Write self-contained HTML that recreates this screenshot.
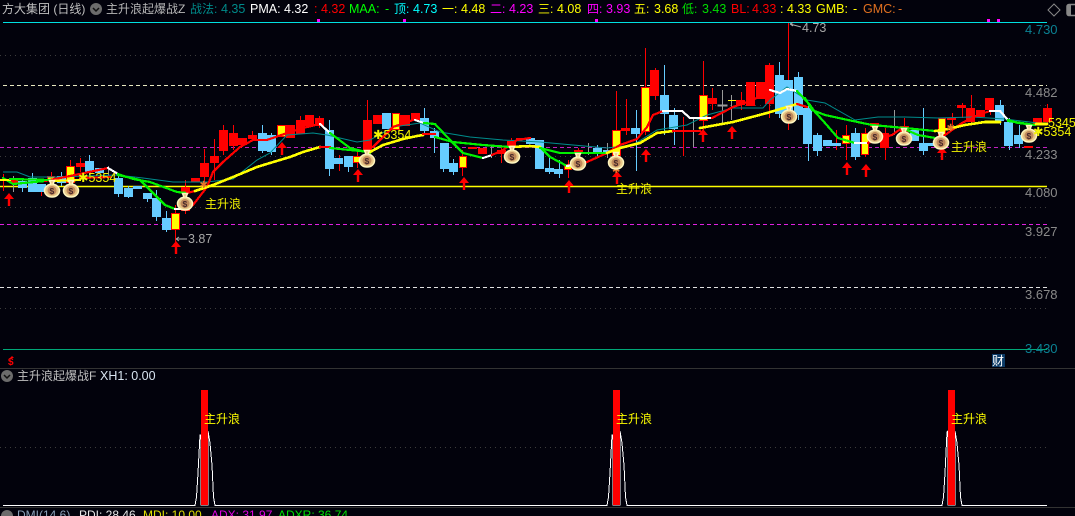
<!DOCTYPE html>
<html><head><meta charset="utf-8">
<style>
html,body{margin:0;padding:0;background:#02020c;width:1075px;height:516px;overflow:hidden}
svg{display:block;position:absolute;left:0;top:0}
text{font-family:"Liberation Sans","Noto Sans CJK SC",sans-serif;font-size:12.5px}
.c{font-size:12px}
.r{fill:#f00}.b{fill:#66ccff}.y{fill:#ff0;stroke:#f00;stroke-width:1}
.wr{stroke:#f00;stroke-width:1}.wb{stroke:#66ccff;stroke-width:1}.wg{stroke:#999;stroke-width:1}
.l{fill:none;stroke-width:2.200;stroke-linejoin:round;stroke-linecap:round;shape-rendering:crispEdges}
.ax{fill:#8a8a8a;font-size:13px}
.z{fill:#f4f400;font-size:12px}
.s{font-size:8.500px;font-weight:bold;fill:#4a2a2a}
</style></head><body>
<svg width="1075" height="516" viewBox="0 0 1075 516">
<defs>
<g id="bag"><path d="M-2.500-8.500h5l-1.500 3.500c4 1 6.500 3.500 6.500 6.500 0 4-3.500 6.500-7.500 6.500s-7.500-2.500-7.500-6.500c0-3 2.500-5.500 6.500-6.500z" fill="#e8c888" stroke="#fff6c0" stroke-width="1.500"/><circle cx="0" cy="1.500" r="4.500" fill="#c08a5c"/></g>
<path id="arr" d="M0-6L5 0H1.200V7H-1.200V0H-5Z" fill="#f00"/>
<circle id="dot" r="6" fill="#6c6c6c"/>
</defs>

<!-- grid -->
<g fill="none" stroke-width="1">
<g stroke="#3c3c3c" stroke-dasharray="1 4">
<path d="M0 55.500H1047M0 105.500H1047M0 156.500H1047M0 207.500H1047M0 257.500H1047M0 308.500H1047M0 447.500H1047"/>
</g>
<path d="M3 85.500H1047" stroke="#e8e8c0" stroke-dasharray="4 3"/>
<path d="M0 147.500H1047" stroke="#c020c0" stroke-dasharray="4 3"/>
<path d="M0 224.500H1047" stroke="#e020e0" stroke-dasharray="4 3"/>
<path d="M0 287.500H1047" stroke="#e0e0e0" stroke-dasharray="4 3"/>
<path d="M3 22.500H1047" stroke="#00e0e0"/>
<path d="M3 349.500H1047" stroke="#00a878"/>
<path d="M0 368.500H1075" stroke="#333"/>
<path d="M0 507.500H1075" stroke="#333"/>
<path d="M0 186.500H1047" stroke="#ffff00" stroke-width="1.500"/>
</g>
<g fill="#f0f"><rect x="317" y="19" width="3" height="3"/><rect x="403" y="19" width="3" height="3"/><rect x="595" y="19" width="3" height="3"/><rect x="987" y="19" width="3" height="3"/><rect x="997" y="19" width="3" height="3"/></g>

<!-- wicks -->
<g shape-rendering="crispEdges">
<path class="wg" d="M13.500 176V192M108.500 166V178M491.500 146V158M588.500 143V155M607.500 143V158M693.500 118V147M722.500 90V125M731.500 95V120M894.500 110V135"/>
<path class="wb" d="M22.500 178V192M32.500 173V192M61.500 172V186M89.500 155V175M118.500 173V197M128.500 186V198M156.500 190V221M166.500 211V232M147.500 193V202M262.500 125V153M271.500 133V155M329.500 120V176M348.500 156V172M424.500 108V135M434.500 128V153M443.500 143V172M453.500 159V175M549.500 158V174M559.500 160V178M597.500 145V158M636.500 110V171M664.500 65V135M674.500 108V145M779.500 62V118M798.500 72V120M808.500 105V161M817.500 133V156M855.500 128V160M923.500 108V155M1000.500 100V125M1009.500 118V150M1019.500 125V148"/>
<path class="wr" d="M3.500 174V191M41.500 186V196M51.500 172V178M70.500 160V197M80.500 158V172M175.500 205V243M185.500 180V214M204.500 149V188M214.500 139V180M223.500 125V155M233.500 125V150M252.500 131V140M300.500 116V134M319.500 116V128M339.500 155V171M357.500 150V168M367.500 100V158M462.500 150V176M501.500 145V163M511.500 138V150M568.500 160V178M578.500 148V158M616.500 91V175M626.500 99V135M645.500 48V135M655.500 68V100M683.500 117V156M703.500 61V130M712.500 88V110M741.500 92V110M769.500 63V118M788.500 23V130M836.500 130V150M846.500 125V160M865.500 128V157M885.500 128V160M904.500 118V140M952.500 113V125M962.500 103V118M971.500 95V125M990.500 98V115M1047.500 104V125"/>

<!-- candle bodies -->
<rect class="r" x="9" y="180" width="9" height="3"/>
<rect class="b" x="18" y="181" width="9" height="7"/>
<rect class="b" x="28" y="178" width="9" height="14"/>
<rect class="b" x="37" y="184" width="9" height="8"/>
<rect class="y" x="47.500" y="176.500" width="7" height="3"/>
<rect class="b" x="57" y="176" width="9" height="7"/>
<rect class="y" x="66.500" y="166.500" width="8" height="16"/>
<rect class="r" x="76" y="163" width="9" height="4"/>
<rect class="b" x="85" y="161" width="9" height="11"/>
<rect class="b" x="95" y="168" width="9" height="5"/>
<rect class="b" x="114" y="178" width="9" height="16"/>
<rect class="b" x="124" y="188" width="9" height="9"/>
<rect class="b" x="133" y="186" width="9" height="3"/>
<rect class="b" x="143" y="193" width="9" height="6"/>
<rect class="b" x="152" y="198" width="9" height="19"/>
<rect class="b" x="162" y="218" width="9" height="12"/>
<rect class="y" x="171.500" y="213.500" width="8" height="16"/>
<rect class="r" x="181" y="187" width="9" height="6"/>
<rect class="r" x="181" y="208" width="9" height="3"/>
<rect class="r" x="191" y="178" width="9" height="4"/>
<rect class="r" x="200" y="163" width="9" height="14"/>
<rect class="r" x="210" y="156" width="9" height="7"/>
<rect class="r" x="219" y="130" width="9" height="21"/>
<rect class="r" x="229" y="133" width="9" height="13"/>
<rect class="r" x="238" y="138" width="9" height="7"/>
<rect class="r" x="248" y="135" width="9" height="4"/>
<rect class="b" x="258" y="133" width="9" height="18"/>
<rect class="b" x="267" y="135" width="9" height="17"/>
<rect class="y" x="277.500" y="125.500" width="8" height="11"/>
<rect class="r" x="286" y="125" width="9" height="13"/>
<rect class="r" x="296" y="120" width="9" height="14"/>
<rect class="r" x="305" y="115" width="9" height="11"/>
<rect class="r" x="315" y="118" width="9" height="8"/>
<rect class="b" x="325" y="130" width="9" height="39"/>
<rect class="b" x="334" y="158" width="9" height="6"/>
<rect class="b" x="344" y="156" width="9" height="11"/>
<rect class="y" x="353.500" y="156.500" width="7" height="6"/>
<rect class="r" x="363" y="120" width="9" height="30"/>
<rect class="r" x="373" y="115" width="9" height="9"/>
<rect class="b" x="382" y="113" width="9" height="16"/>
<rect class="y" x="392.500" y="113.500" width="7" height="16"/>
<rect class="r" x="400" y="115" width="10" height="11"/>
<rect class="r" x="411" y="113" width="9" height="7"/>
<rect class="b" x="420" y="118" width="9" height="13"/>
<rect class="b" x="430" y="131" width="9" height="7"/>
<rect class="b" x="440" y="143" width="9" height="26"/>
<rect class="b" x="449" y="163" width="9" height="9"/>
<rect class="y" x="459.500" y="156.500" width="7" height="11"/>
<rect class="r" x="468" y="147" width="9" height="2"/>
<rect class="r" x="478" y="148" width="9" height="6"/>
<rect class="r" x="497" y="150" width="9" height="4"/>
<rect class="r" x="507" y="141" width="9" height="5"/>
<rect class="r" x="516" y="138" width="9" height="2"/>
<rect class="b" x="526" y="138" width="9" height="6"/>
<rect class="b" x="535" y="140" width="9" height="29"/>
<rect class="b" x="545" y="168" width="9" height="4"/>
<rect class="b" x="554" y="169" width="9" height="5"/>
<rect class="y" x="564.500" y="164.500" width="7" height="5"/>
<rect class="r" x="574" y="150" width="9" height="3"/>
<rect class="b" x="593" y="148" width="9" height="4"/>
<rect class="b" x="603" y="150" width="8" height="3"/>
<rect class="y" x="612.500" y="130.500" width="8" height="25"/>
<rect class="r" x="621" y="128" width="9" height="3"/>
<rect class="b" x="631" y="128" width="9" height="6"/>
<rect class="y" x="641.500" y="87.500" width="8" height="44"/>
<rect class="r" x="650" y="70" width="9" height="26"/>
<rect class="b" x="660" y="95" width="9" height="19"/>
<rect class="b" x="669" y="115" width="9" height="14"/>
<rect class="y" x="699.500" y="95.500" width="8" height="25"/>
<rect class="r" x="708" y="98" width="9" height="6"/>
<rect class="wg" x="718" y="105" width="9" height="1" fill="#999"/>
<rect x="728" y="100" width="8" height="1" fill="#ff0"/>
<rect class="r" x="736" y="100" width="9" height="5"/>
<rect class="r" x="746" y="82" width="9" height="24"/>
<rect class="r" x="756" y="82" width="9" height="17"/>
<rect class="r" x="765" y="65" width="9" height="39"/>
<rect class="b" x="775" y="75" width="9" height="39"/>
<rect class="b" x="784" y="80" width="9" height="40"/>
<rect class="b" x="794" y="77" width="9" height="38"/>
<rect class="b" x="803" y="108" width="9" height="36"/>
<rect class="b" x="813" y="135" width="9" height="16"/>
<rect class="b" x="823" y="140" width="9" height="6"/>
<rect class="b" x="832" y="143" width="9" height="3"/>
<rect class="y" x="842.500" y="135.500" width="7" height="8"/>
<rect class="b" x="851" y="133" width="9" height="24"/>
<rect class="y" x="861.500" y="133.500" width="7" height="21"/>
<rect class="r" x="870" y="123" width="9" height="4"/>
<rect class="r" x="880" y="133" width="9" height="15"/>
<rect class="r" x="900" y="126" width="9" height="6"/>
<rect class="b" x="910" y="130" width="9" height="11"/>
<rect class="b" x="919" y="143" width="9" height="8"/>
<rect class="b" x="928" y="143" width="9" height="3"/>
<rect class="y" x="938.500" y="118.500" width="7" height="17"/>
<rect class="r" x="947" y="118" width="9" height="2"/>
<rect class="r" x="957" y="105" width="9" height="3"/>
<rect class="r" x="966" y="108" width="9" height="14"/>
<rect class="r" x="976" y="110" width="9" height="7"/>
<rect class="r" x="985" y="98" width="9" height="12"/>
<rect class="b" x="995" y="105" width="9" height="16"/>
<rect class="b" x="1004" y="122" width="9" height="24"/>
<rect class="b" x="1014" y="135" width="9" height="9"/>
<rect class="r" x="1024" y="146" width="9" height="2"/>
<rect class="r" x="1033" y="118" width="9" height="7"/>
<rect class="r" x="1043" y="108" width="9" height="14"/>
</g>

<!-- teal MA -->
<path fill="none" stroke="#008c8c" stroke-width="1" d="M3 172L17 172L30 177L57 177L117 175L143 178L173 182L207 182L233 179L257 160L270 153L287 135L313 133L327 135L357 142L370 140L393 127L420 123L440 132L470 137L503 140L540 142L573 145L607 148L633 145L657 130L687 125L707 115L733 108L763 108L770 100L787 87L807 100L825 103L855 120L878 117L905 117L938 118L972 117L1005 119L1038 123"/>

<!-- fast MA -->
<path class="l" stroke="#00f000" d="M3 178L13 184L45 181"/>
<path class="l" stroke="#f00" d="M45 181L70 176L108 168"/>
<path class="l" stroke="#fff" d="M108 168L118 174"/>
<path class="l" stroke="#00f000" d="M118 175L140 180L150 190L165 205L175 209"/>
<path class="l" stroke="#fff" d="M175 209L186 209"/>
<path class="l" stroke="#f00" d="M186 209L193 205L207 187L213 172L223 162L240 147L253 140L267 140L287 133L303 128L320 124"/>
<path class="l" stroke="#fff" d="M320 124L330 133"/>
<path class="l" stroke="#00f000" d="M330 133L350 148L370 153"/>
<path class="l" stroke="#f00" d="M373 147L393 127L413 120"/>
<path class="l" stroke="#fff" d="M415 120L424 123"/>
<path class="l" stroke="#00f000" d="M424 123L435 124L450 140L463 153L483 158"/>
<path class="l" stroke="#fff" d="M483 158L492 155"/>
<path class="l" stroke="#f00" d="M492 155L503 150L517 140L530 138"/>
<path class="l" stroke="#00f000" d="M540 147L550 157L567 166"/>
<path class="l" stroke="#fff" d="M567 166L587 162"/>
<path class="l" stroke="#f00" d="M587 162L607 153L620 145L637 139L647 127L653 115L663 111"/>
<path class="l" stroke="#fff" d="M663 111L682 111L690 118L712 118"/>
<path class="l" stroke="#f00" d="M712 118L733 107L753 100L770 90"/>
<path class="l" stroke="#fff" d="M770 90L780 93L787 89L797 91"/>
<path class="l" stroke="#00f000" d="M797 91L810 105L815 112L825 123L838 138L855 143"/>
<path class="l" stroke="#fff" d="M855 143L868 143"/>
<path class="l" stroke="#f00" d="M868 143L882 138L892 135L902 128"/>
<path class="l" stroke="#00f000" d="M902 128L918 135L935 138"/>
<path class="l" stroke="#f00" d="M937 138L945 135L962 123L978 115L990 111"/>
<path class="l" stroke="#fff" d="M990 111L1000 111L1008 120"/>
<path class="l" stroke="#00f000" d="M1008 120L1018 123L1035 125"/>

<!-- slow MA -->
<path class="l" stroke="#ff0" d="M0 180L10 180"/>
<path class="l" stroke="#00f000" d="M10 179L50 180"/>
<path class="l" stroke="#ff0" d="M50 181L80 180"/>
<path class="l" stroke="#f00" d="M80 178L110 177"/>
<path class="l" stroke="#00f000" d="M118 174L133 179L150 182L177 192L187 193"/>
<path class="l" stroke="#f00" d="M187 193L195 191"/>
<path class="l" stroke="#ff0" style="stroke-width:2.600" d="M195 191L213 185L233 177L257 167L270 163L290 157L303 152L320 147"/>
<path class="l" stroke="#f00" d="M320 147L330 147"/>
<path class="l" stroke="#00f000" d="M330 148L350 150L370 152"/>
<path class="l" stroke="#ff0" style="stroke-width:2.600" d="M370 152L383 145L403 139L417 136L423 135"/>
<path class="l" stroke="#f00" d="M423 134L435 134"/>
<path class="l" stroke="#00f000" d="M435 137L453 142L483 145L510 147"/>
<path class="l" stroke="#ff0" style="stroke-width:2.600" d="M510 147L530 146L540 147"/>
<path class="l" stroke="#00f000" d="M540 148L560 153L583 153L607 153"/>
<path class="l" stroke="#ff0" style="stroke-width:2.600" d="M607 153L620 148L640 143L657 133L673 131"/>
<path class="l" stroke="#f00" d="M673 131L700 131"/>
<path class="l" stroke="#ff0" style="stroke-width:2.600" d="M700 128L733 122L767 113L797 104"/>
<path class="l" stroke="#f00" d="M797 104L807 107"/>
<path class="l" stroke="#00f000" d="M805 98L812 110L825 115L848 120L872 125L905 128L935 131"/>
<path class="l" stroke="#ff0" style="stroke-width:2.600" d="M935 131L948 129L965 125L985 122L1000 122"/>
<path class="l" stroke="#00f000" d="M1008 121L1035 125"/>
<path class="l" stroke="#ff0" style="stroke-width:2.600" d="M1036 124L1047 124"/>

<!-- arrows -->
<use href="#arr" x="9" y="199"/><use href="#arr" x="176" y="247"/><use href="#arr" x="282" y="148"/>
<use href="#arr" x="358" y="175"/><use href="#arr" x="464" y="183"/><use href="#arr" x="569" y="186"/>
<use href="#arr" x="617" y="177"/><use href="#arr" x="646" y="155"/><use href="#arr" x="703" y="135"/>
<use href="#arr" x="732" y="132"/><use href="#arr" x="847" y="168"/><use href="#arr" x="866" y="170"/><use href="#arr" x="942" y="153"/>

<!-- orange markers -->
<g fill="#e8742a"><text x="199.500" y="188" style="font-size:10px">✱</text><text x="612" y="173" style="font-size:10px">✱</text><text x="946.500" y="131" style="font-size:10px">✱</text></g>

<!-- bags -->
<g>
<g transform="translate(52,189)"><use href="#bag"/><text class="s" x="-2.500" y="5">$</text></g>
<g transform="translate(71,189)"><use href="#bag"/><text class="s" x="-2.500" y="5">$</text></g>
<g transform="translate(185,202)"><use href="#bag"/><text class="s" x="-2.500" y="5">$</text></g>
<g transform="translate(367,159)"><use href="#bag"/><text class="s" x="-2.500" y="5">$</text></g>
<g transform="translate(512,155)"><use href="#bag"/><text class="s" x="-2.500" y="5">$</text></g>
<g transform="translate(578,162)"><use href="#bag"/><text class="s" x="-2.500" y="5">$</text></g>
<g transform="translate(616,161)"><use href="#bag"/><text class="s" x="-2.500" y="5">$</text></g>
<g transform="translate(789,115)"><use href="#bag"/><text class="s" x="-2.500" y="5">$</text></g>
<g transform="translate(875,135)"><use href="#bag"/><text class="s" x="-2.500" y="5">$</text></g>
<g transform="translate(904,137)"><use href="#bag"/><text class="s" x="-2.500" y="5">$</text></g>
<g transform="translate(941,141)"><use href="#bag"/><text class="s" x="-2.500" y="5">$</text></g>
<g transform="translate(1029,134)"><use href="#bag"/><text class="s" x="-2.500" y="5">$</text></g>
</g>

<!-- chart labels -->
<text class="z" x="205" y="208">主升浪</text>
<text class="z" x="616" y="193">主升浪</text>
<text class="z" x="951" y="151">主升浪</text>
<text class="z" x="78" y="182" style="font-size:12.500px">✱5354</text>
<text class="z" x="373" y="139" style="font-size:12.500px">✱5354</text>
<text class="z" x="1033" y="136" style="font-size:12.500px">✱5354</text>
<text class="z" x="1048" y="127" style="font-size:12.500px">5345</text>
<text x="802" y="32" fill="#a8a8a8">4.73</text>
<path d="M790 24L801 27M790 24l3-1.500M790 24l3 2" stroke="#aaa" fill="none"/>
<text x="188" y="243" fill="#a8a8a8">3.87</text>
<path d="M176 239H187M176 239l3-2M176 239l3 2" stroke="#aaa" fill="none"/>

<!-- axis -->
<text x="1025" y="34" style="font-size:13px" fill="#0b8294">4.730</text>
<text class="ax" x="1025" y="97">4.482</text>
<text class="ax" x="1025" y="159">4.233</text>
<text class="ax" x="1025" y="197">4.080</text>
<text class="ax" x="1025" y="236">3.927</text>
<text class="ax" x="1025" y="299">3.678</text>
<text x="1025" y="353" style="font-size:13px" fill="#0b8294">3.430</text>

<!-- markers -->
<text x="8" y="365" style="font-size:10px;font-weight:bold" fill="#f00">$</text>
<path d="M12 356l-2 2h4z" fill="#f00"/>
<rect x="992" y="354" width="13" height="13" fill="#0b3a66"/>
<text class="c" x="992" y="365" fill="#fff">财</text>

<!-- header -->
<text class="c" x="2" y="13" fill="#c0c0c0">方大集团 (日线)</text>
<use href="#dot" x="96" y="9"/><path d="M93 8l3 3 3-3" stroke="#111" stroke-width="1.500" fill="none"/>
<text class="c" x="106" y="13" fill="#b8b8b8">主升浪起爆战Z</text>
<text class="c" x="190" y="13" fill="#008a8a">战法:</text><text x="221" y="13" fill="#008a8a">4.35</text>
<text x="250" y="13" fill="#fff">PMA:</text><text x="284" y="13" fill="#fff">4.32</text>
<text x="314" y="13" fill="#f00">: 4.32</text>
<text x="349" y="13" fill="#0f0">MAA:</text><text x="385" y="13" fill="#0f0">-</text>
<text class="c" x="394" y="13" fill="#0ff">顶:</text><text x="413" y="13" fill="#0ff">4.73</text>
<text class="c" x="442" y="13" fill="#ff0">一:</text><text x="461" y="13" fill="#ff0">4.48</text>
<text class="c" x="490" y="13" fill="#f0f">二:</text><text x="509" y="13" fill="#f0f">4.23</text>
<text class="c" x="538" y="13" fill="#ff0">三:</text><text x="557" y="13" fill="#ff0">4.08</text>
<text class="c" x="587" y="13" fill="#f0f">四:</text><text x="606" y="13" fill="#f0f">3.93</text>
<text class="c" x="634" y="13" fill="#ff0">五:</text><text x="654" y="13" fill="#ff0">3.68</text>
<text class="c" x="682" y="13" fill="#0d0">低:</text><text x="702" y="13" fill="#0d0">3.43</text>
<text x="731" y="13" fill="#f00">BL:</text><text x="752" y="13" fill="#f00">4.33</text>
<text x="780" y="13" fill="#ff0">: 4.33</text>
<text x="816" y="13" fill="#ff0">GMB:</text><text x="853" y="13" fill="#ff0">-</text>
<text x="863" y="13" fill="#e07020">GMC:</text><text x="898" y="13" fill="#e07020">-</text>
<path d="M1054 4l6 6-6 6-6-6z" fill="none" stroke="#888"/>
<rect x="1067" y="4.500" width="12" height="11" rx="2" fill="none" stroke="#888" stroke-width="1.500"/>
<rect x="1067" y="5" width="4" height="10" fill="#888"/>

<!-- sub panel -->
<use href="#dot" x="7" y="376"/><path d="M4 375l3 3 3-3" stroke="#111" stroke-width="1.500" fill="none"/>
<text class="c" x="17" y="380" fill="#c0c0c0">主升浪起爆战F</text>
<text x="100" y="380" fill="#d8e4f0">XH1: 0.00</text>

<path shape-rendering="crispEdges" d="M3 505.500H195L196.500 497L198 473L200 435L201 435V505H208V431L210 443L212 465L213.500 497L215 505.500H607L608.500 497L610 473L612 435L613 435V505H620V431L622 443L624 465L625.500 497L627 505.500H942L943.500 497L945 473L947 432L948 431V505H955V431L957 443L959 465L960.500 497L962 505.500H1047" fill="none" stroke="#fff" stroke-width="1"/>
<g shape-rendering="crispEdges"><rect class="r" x="201" y="390" width="7" height="115"/><rect class="r" x="613" y="390" width="7" height="115"/><rect class="r" x="948" y="390" width="7" height="115"/></g>
<text class="c" x="204" y="423" fill="#ff0">主升浪</text>
<text class="c" x="616" y="423" fill="#ff0">主升浪</text>
<text class="c" x="951" y="423" fill="#ff0">主升浪</text>

<!-- bottom -->
<use href="#dot" x="7" y="516"/>
<text x="17" y="519" fill="#8aa0b8" style="font-size:12px">DMI(14,6)</text>
<text x="79" y="519" fill="#e8e8e8" style="font-size:12px">PDI: 28.46</text>
<text x="143" y="519" fill="#e0e000" style="font-size:12px">MDI: 10.00</text>
<text x="211" y="519" fill="#e000e0" style="font-size:12px">ADX: 31.97</text>
<text x="278" y="519" fill="#00e000" style="font-size:12px">ADXR: 36.74</text>
</svg>
</body></html>
